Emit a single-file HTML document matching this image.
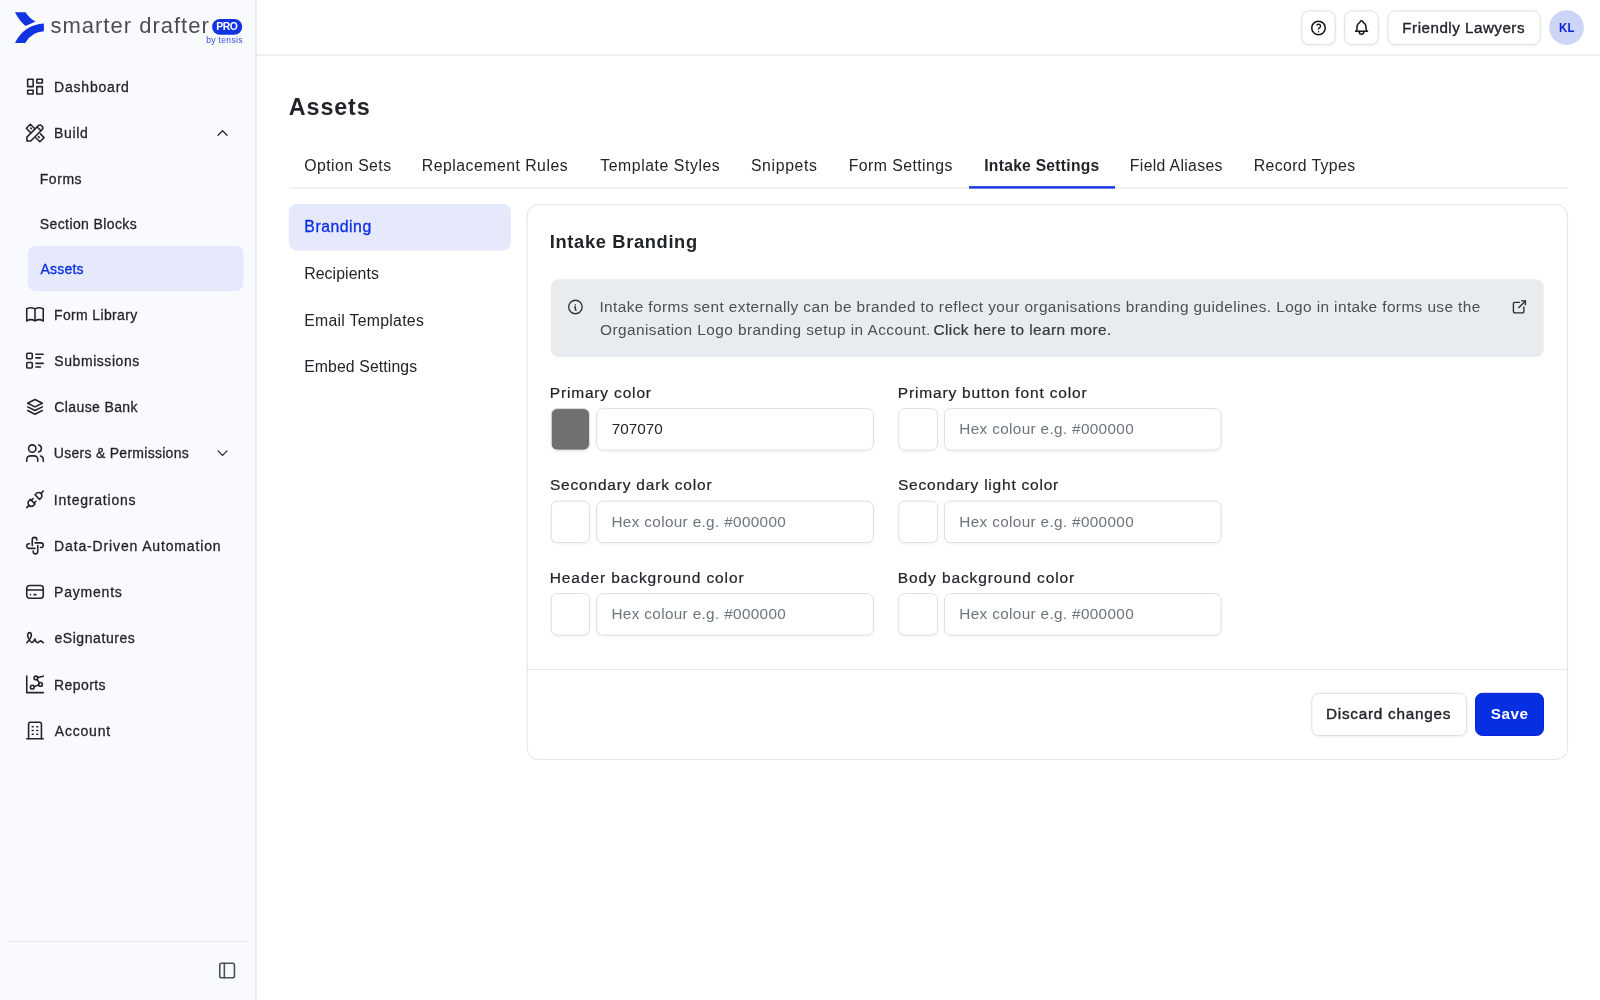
<!DOCTYPE html>
<html lang="en">
<head>
<meta charset="utf-8">
<title>Assets - Intake Settings - Smarter Drafter Pro</title>
<style>
*{box-sizing:border-box;margin:0;padding:0}
html,body{width:1600px;height:1000px;overflow:hidden;background:#fff}
body{font-family:"Liberation Sans",sans-serif;color:#212529}
#app{position:relative;width:1600px;height:1000px;overflow:hidden;will-change:transform}
.a{position:absolute}
.t{position:absolute;white-space:nowrap;line-height:1;text-decoration:none;display:block}
.ic{position:absolute;fill:none;stroke:#212529;stroke-width:1.72;stroke-linecap:round;stroke-linejoin:round;overflow:visible}
</style>
</head>
<body>
<div id="app">
<svg class="a" style="left:0;top:0" width="1600" height="1000" viewBox="0 0 1600 1000">
<defs><filter id="sh" x="-10%" y="-10%" width="120%" height="140%"><feDropShadow dx="0" dy="1" stdDeviation="1" flood-color="#101828" flood-opacity=".07"/></filter></defs>
<rect x="0.00" y="0.00" width="255.50" height="1000.00" fill="#f9fafe"/>
<rect x="255.50" y="0.00" width="1.00" height="1000.00" fill="#d9dde4"/>
<rect x="256.50" y="54.50" width="1343.50" height="1.00" fill="#dfe3e8"/>
<rect x="27.90" y="245.75" width="215.60" height="45.25" rx="8" fill="#e6e9fc"/>
<rect x="7.00" y="940.75" width="241.00" height="1.00" fill="#e1e4e9"/>
<g filter="url(#sh)">
<rect x="1301.70" y="10.90" width="33.50" height="33.70" rx="7.5" fill="#fff" stroke="#dbe0e6" stroke-width="1"/>
<rect x="1344.70" y="10.90" width="33.50" height="33.70" rx="7.5" fill="#fff" stroke="#dbe0e6" stroke-width="1"/>
<rect x="1387.90" y="10.90" width="152.30" height="33.70" rx="7.5" fill="#fff" stroke="#dbe0e6" stroke-width="1"/>
</g>
<circle cx="1566.55" cy="27.55" r="17.35" fill="#cdd5f7"/>
<rect x="289.00" y="187.50" width="1278.75" height="1.00" fill="#e3e6ea"/>
<rect x="969.00" y="186.10" width="146.00" height="2.50" fill="#1c3be3"/>
<rect x="288.75" y="203.90" width="222.25" height="46.50" rx="8" fill="#e6e9fc"/>
<rect x="527.20" y="204.60" width="1040.40" height="554.80" rx="11.5" fill="#fff" stroke="#dfe3e7" stroke-width="1"/>
<rect x="550.75" y="279.25" width="993.00" height="77.75" rx="8" fill="#e9ecef"/>
<g filter="url(#sh)">
<rect x="551.25" y="408.60" width="38.25" height="41.50" rx="6" fill="#707070" stroke="#dbe0e6" stroke-width="1"/>
<rect x="596.60" y="408.60" width="276.80" height="41.50" rx="6.5" fill="#fff" stroke="#dbe0e6" stroke-width="1"/>
<rect x="898.75" y="408.60" width="38.75" height="41.50" rx="6" fill="#fff" stroke="#dbe0e6" stroke-width="1"/>
<rect x="944.40" y="408.60" width="276.70" height="41.50" rx="6.5" fill="#fff" stroke="#dbe0e6" stroke-width="1"/>
<rect x="551.25" y="501.10" width="38.25" height="41.50" rx="6" fill="#fff" stroke="#dbe0e6" stroke-width="1"/>
<rect x="596.60" y="501.10" width="276.80" height="41.50" rx="6.5" fill="#fff" stroke="#dbe0e6" stroke-width="1"/>
<rect x="898.75" y="501.10" width="38.75" height="41.50" rx="6" fill="#fff" stroke="#dbe0e6" stroke-width="1"/>
<rect x="944.40" y="501.10" width="276.70" height="41.50" rx="6.5" fill="#fff" stroke="#dbe0e6" stroke-width="1"/>
<rect x="551.25" y="593.60" width="38.25" height="41.50" rx="6" fill="#fff" stroke="#dbe0e6" stroke-width="1"/>
<rect x="596.60" y="593.60" width="276.80" height="41.50" rx="6.5" fill="#fff" stroke="#dbe0e6" stroke-width="1"/>
<rect x="898.75" y="593.60" width="38.75" height="41.50" rx="6" fill="#fff" stroke="#dbe0e6" stroke-width="1"/>
<rect x="944.40" y="593.60" width="276.70" height="41.50" rx="6.5" fill="#fff" stroke="#dbe0e6" stroke-width="1"/>
<rect x="1311.80" y="693.30" width="154.80" height="42.20" rx="7" fill="#fff" stroke="#dbe0e6" stroke-width="1"/>
</g>
<rect x="527.40" y="668.90" width="1039.90" height="1.00" fill="#e0e4e9"/>
<rect x="1475.50" y="693.30" width="68.00" height="42.20" rx="7" fill="#052fe1" stroke="#0a1fd8" stroke-width="1"/>
</svg>

<!-- logo mark -->
<svg class="a" style="left:0;top:0" width="60" height="56" viewBox="0 0 60 56">
<path fill="#1133e1" d="M15 12.2L25.6 12.2Q29.6 18.6 35.5 21.5L25.6 26Q19 20.5 15 12.2Z"/>
<path fill="#1133e1" d="M43.9 23.6L43.9 31.3Q31.5 31.9 25.2 42.9L15 42.9Q24 25 43.9 23.6Z"/>
</svg>
<svg class="a" style="left:200px;top:10px" width="50" height="30" viewBox="200 10 50 30"><rect x="212.1" y="19" width="30.1" height="15.8" rx="7.9" fill="#1133e1"/></svg>
<svg class="a ic" style="left:0;top:0" width="1600" height="1000" viewBox="0 0 1600 1000">
<g transform="translate(24.00 75.60) scale(0.9167)"><path d="M4 4h6v8h-6z"/><path d="M4 16h6v4h-6z"/><path d="M14 12h6v8h-6z"/><path d="M14 4h6v4h-6z"/></g>
<g transform="translate(24.00 121.90) scale(0.9167)"><path d="M3.2 20.8h4.2l12.2 -12.2a2.97 2.97 0 0 0 -4.2 -4.2l-12.2 12.2z"/><path d="M14.3 5.5l4.2 4.2"/><path d="M11.3 6.9l-4.4 -4.4l-4.4 4.4l4.2 4.2"/><path d="M7.2 6.6l0.9 .9"/><path d="M12.9 17.3l4.4 4.4l4.6 -4.6l-4 -4"/><path d="M16.6 16.9l-0.9 -.9"/></g>
<g transform="translate(24.00 303.40) scale(0.9167)"><path d="M3 19a9 9 0 0 1 9 0a9 9 0 0 1 9 0"/><path d="M3 6a9 9 0 0 1 9 0a9 9 0 0 1 9 0"/><path d="M3 6v13"/><path d="M12 6v13"/><path d="M21 6v13"/></g>
<g transform="translate(24.00 349.60) scale(0.9167)"><path d="M13 5h8"/><path d="M13 9h5"/><path d="M13 15h8"/><path d="M13 19h5"/><path d="M3 5a1 1 0 0 1 1 -1h4a1 1 0 0 1 1 1v4a1 1 0 0 1 -1 1h-4a1 1 0 0 1 -1 -1z"/><path d="M3 15a1 1 0 0 1 1 -1h4a1 1 0 0 1 1 1v4a1 1 0 0 1 -1 1h-4a1 1 0 0 1 -1 -1z"/></g>
<g transform="translate(24.00 395.90) scale(0.9167)"><path d="M12 4l-8 4l8 4l8 -4l-8 -4"/><path d="M4 12l8 4l8 -4"/><path d="M4 16l8 4l8 -4"/></g>
<g transform="translate(24.00 442.10) scale(0.9167)"><path d="M5 7a4 4 0 1 0 8 0a4 4 0 1 0 -8 0"/><path d="M3 21v-2a4 4 0 0 1 4 -4h4a4 4 0 0 1 4 4v2"/><path d="M16 3.13a4 4 0 0 1 0 7.75"/><path d="M21 21v-2a4 4 0 0 0 -3 -3.85"/></g>
<g transform="translate(24.00 488.40) scale(0.9167)"><path d="M7 12l5 5l-1.5 1.5a3.536 3.536 0 1 1 -5 -5l1.5 -1.5z"/><path d="M17 12l-5 -5l1.5 -1.5a3.536 3.536 0 1 1 5 5l-1.5 1.5z"/><path d="M3 21l2.5 -2.5"/><path d="M18.5 5.5l2.5 -2.5"/><path d="M10 11l-2 2"/><path d="M13 14l-2 2"/></g>
<g transform="translate(24.00 534.60) scale(0.9167)"><path d="M9 12v-6.5a2.5 2.5 0 0 1 5 0v.5"/><path d="M12 9h6.5a2.5 2.5 0 0 1 0 5h-.5"/><path d="M15 12v6.5a2.5 2.5 0 0 1 -5 0v-.5"/><path d="M12 15h-6.5a2.5 2.5 0 0 1 0 -5h.5"/></g>
<g transform="translate(24.00 580.90) scale(0.9167)"><path d="M3 8a3 3 0 0 1 3 -3h12a3 3 0 0 1 3 3v8a3 3 0 0 1 -3 3h-12a3 3 0 0 1 -3 -3z"/><path d="M3 10h18"/><path d="M7 15h.01"/><path d="M11 15h2"/></g>
<g transform="translate(24.00 627.10) scale(0.9167)"><path d="M3 17c3.333 -3.333 5 -6 5 -8c0 -3 -1 -3 -2 -3s-2.032 1.085 -2 3c.034 2.048 1.658 4.877 2.5 6c1.500 2 2.500 2.500 3.500 1l2 -3c.333 2.667 1.333 4 3 4c.530 0 2.639 -2 3 -2c.517 0 1.517 .667 3 2"/></g>
<g transform="translate(24.00 673.40) scale(0.9167)"><path d="M3 3v18h18"/><path d="M7 15a2 2 0 1 0 4 0a2 2 0 1 0 -4 0"/><path d="M11 5a2 2 0 1 0 4 0a2 2 0 1 0 -4 0"/><path d="M16 12a2 2 0 1 0 4 0a2 2 0 1 0 -4 0"/><path d="M21 3l-6 1.500"/><path d="M14.113 6.650l2.771 3.695"/><path d="M16 12.500l-5 2"/></g>
<g transform="translate(24.00 719.50) scale(0.9167)"><path d="M3 21h18"/><path d="M9 8h1"/><path d="M9 12h1"/><path d="M9 16h1"/><path d="M14 8h1"/><path d="M14 12h1"/><path d="M14 16h1"/><path d="M5 21v-16a2 2 0 0 1 2 -2h10a2 2 0 0 1 2 2v16"/></g>
<g transform="translate(213.55 124.00) scale(0.7500)" stroke-width="1.65"><path d="M6 15l6 -6l6 6"/></g>
<g transform="translate(213.55 444.10) scale(0.7500)" stroke-width="1.65"><path d="M6 9l6 6l6 -6"/></g>
<g transform="translate(216.10 959.50) scale(0.9167)" stroke="#495057"><path d="M4 6a2 2 0 0 1 2 -2h12a2 2 0 0 1 2 2v12a2 2 0 0 1 -2 2h-12a2 2 0 0 1 -2 -2z"/><path d="M9 4v16"/></g>
<g transform="translate(1309.50 18.90) scale(0.7500)" stroke-width="2" stroke="#16181b"><path d="M3 12a9 9 0 1 0 18 0a9 9 0 1 0 -18 0"/><path d="M12 17v.01"/><path d="M12 13.5a1.5 1.5 0 0 1 1 -1.5a2.6 2.6 0 1 0 -3 -4"/></g>
<g transform="translate(1352.50 18.60) scale(0.7500)" stroke-width="2" stroke="#16181b"><path d="M10 5a2 2 0 1 1 4 0a7 7 0 0 1 4 6v3a4 4 0 0 0 2 3h-16a4 4 0 0 0 2 -3v-3a7 7 0 0 1 4 -6"/><path d="M9 17v1a3 3 0 0 0 6 0v-1"/></g>
<g transform="translate(566.40 298.00) scale(0.7500)" stroke-width="1.75" stroke="#2b3440"><path d="M3 12a9 9 0 1 0 18 0a9 9 0 0 0 -18 0"/><path d="M12 9h.01"/><path d="M11 12h1v4h1"/></g>
<g transform="translate(1510.40 297.90) scale(0.7500)" stroke-width="1.8" stroke="#222c38"><path d="M12 6h-6a2 2 0 0 0 -2 2v10a2 2 0 0 0 2 2h10a2 2 0 0 0 2 -2v-6"/><path d="M11 13l9 -9"/><path d="M15 4h5v5"/></g>
</svg>
<header class="brand">
<span class="t" id="logo" style="left:50.42px;top:14.68px;font-size:22px;letter-spacing:1.010px;font-weight:400;color:#4d4d4d;">smarter drafter</span>
<span class="t" id="pro" style="left:216.30px;top:22.40px;font-size:10.4px;letter-spacing:-0.450px;font-weight:700;color:#ffffff;">PRO</span>
<span class="t" id="bytensis" style="left:206.23px;top:36.32px;font-size:8.6px;letter-spacing:0.294px;font-weight:400;color:#2f4de6;">by tensis</span>
</header>
<nav class="sidebar-nav">
<span class="t" id="s1" style="left:54.10px;top:79.85px;font-size:14.0px;letter-spacing:0.790px;font-weight:400;color:#212529;-webkit-text-stroke:0.28px currentColor;">Dashboard</span>
<span class="t" id="s2" style="left:54.10px;top:126.10px;font-size:14.0px;letter-spacing:0.648px;font-weight:400;color:#212529;-webkit-text-stroke:0.28px currentColor;">Build</span>
<span class="t" id="s3" style="left:39.79px;top:172.10px;font-size:14.0px;letter-spacing:0.536px;font-weight:400;color:#212529;-webkit-text-stroke:0.28px currentColor;">Forms</span>
<span class="t" id="s4" style="left:39.80px;top:217.40px;font-size:14.0px;letter-spacing:0.394px;font-weight:400;color:#212529;-webkit-text-stroke:0.28px currentColor;">Section Blocks</span>
<span class="t" id="s5" style="left:40.51px;top:262.35px;font-size:14.0px;letter-spacing:0.197px;font-weight:400;color:#0a2ee0;-webkit-text-stroke:0.32px currentColor;">Assets</span>
<span class="t" id="s6" style="left:54.10px;top:307.60px;font-size:14.0px;letter-spacing:0.343px;font-weight:400;color:#212529;-webkit-text-stroke:0.28px currentColor;">Form Library</span>
<span class="t" id="s7" style="left:54.36px;top:353.85px;font-size:14.0px;letter-spacing:0.553px;font-weight:400;color:#212529;-webkit-text-stroke:0.28px currentColor;">Submissions</span>
<span class="t" id="s8" style="left:54.37px;top:400.10px;font-size:14.0px;letter-spacing:0.379px;font-weight:400;color:#212529;-webkit-text-stroke:0.28px currentColor;">Clause Bank</span>
<span class="t" id="s9" style="left:53.86px;top:446.35px;font-size:14.0px;letter-spacing:0.273px;font-weight:400;color:#212529;-webkit-text-stroke:0.28px currentColor;">Users &amp; Permissions</span>
<span class="t" id="s10" style="left:53.72px;top:492.60px;font-size:14.0px;letter-spacing:0.794px;font-weight:400;color:#212529;-webkit-text-stroke:0.28px currentColor;">Integrations</span>
<span class="t" id="s11" style="left:54.10px;top:538.85px;font-size:14.0px;letter-spacing:0.853px;font-weight:400;color:#212529;-webkit-text-stroke:0.28px currentColor;">Data-Driven Automation</span>
<span class="t" id="s12" style="left:54.10px;top:585.10px;font-size:14.0px;letter-spacing:0.780px;font-weight:400;color:#212529;-webkit-text-stroke:0.28px currentColor;">Payments</span>
<span class="t" id="s13" style="left:54.38px;top:631.35px;font-size:14.0px;letter-spacing:0.575px;font-weight:400;color:#212529;-webkit-text-stroke:0.28px currentColor;">eSignatures</span>
<span class="t" id="s14" style="left:54.10px;top:677.60px;font-size:14.0px;letter-spacing:0.404px;font-weight:400;color:#212529;-webkit-text-stroke:0.28px currentColor;">Reports</span>
<span class="t" id="s15" style="left:54.86px;top:723.60px;font-size:14.0px;letter-spacing:0.781px;font-weight:400;color:#212529;-webkit-text-stroke:0.28px currentColor;">Account</span>
</nav>
<header class="topbar">
<span class="t" id="org" style="left:1402.33px;top:19.98px;font-size:15.2px;letter-spacing:0.493px;font-weight:400;color:#212529;-webkit-text-stroke:0.35px currentColor;">Friendly Lawyers</span>
<span class="t" id="kl" style="left:1558.80px;top:21.19px;font-size:13.6px;letter-spacing:0.446px;font-weight:700;color:#0a24dc;transform:scaleX(.84);transform-origin:0 0;">KL</span>
</header>
<div class="page-head">
<h1 class="t" id="title" style="left:288.85px;top:95.88px;font-size:23.3px;letter-spacing:0.892px;font-weight:700;color:#212529;">Assets</h1>
</div>
<nav class="tabs">
<span class="t" id="t1" style="left:304.27px;top:157.63px;font-size:15.8px;letter-spacing:0.423px;font-weight:400;color:#212529;">Option Sets</span>
<span class="t" id="t2" style="left:421.87px;top:157.63px;font-size:15.8px;letter-spacing:0.490px;font-weight:400;color:#212529;">Replacement Rules</span>
<span class="t" id="t3" style="left:600.30px;top:157.63px;font-size:15.8px;letter-spacing:0.565px;font-weight:400;color:#212529;">Template Styles</span>
<span class="t" id="t4" style="left:750.95px;top:157.63px;font-size:15.8px;letter-spacing:0.651px;font-weight:400;color:#212529;">Snippets</span>
<span class="t" id="t5" style="left:848.75px;top:157.63px;font-size:15.8px;letter-spacing:0.447px;font-weight:400;color:#212529;">Form Settings</span>
<span class="t" id="t6" style="left:984.26px;top:157.79px;font-size:15.6px;letter-spacing:0.289px;font-weight:700;color:#212529;">Intake Settings</span>
<span class="t" id="t7" style="left:1129.87px;top:157.63px;font-size:15.8px;letter-spacing:0.322px;font-weight:400;color:#212529;">Field Aliases</span>
<span class="t" id="t8" style="left:1253.75px;top:157.63px;font-size:15.8px;letter-spacing:0.379px;font-weight:400;color:#212529;">Record Types</span>
</nav>
<nav class="subnav">
<span class="t" id="n1" style="left:304.36px;top:219.43px;font-size:15.8px;letter-spacing:0.515px;font-weight:400;color:#0a2ee0;-webkit-text-stroke:0.3px currentColor;">Branding</span>
<span class="t" id="n2" style="left:304.14px;top:265.73px;font-size:15.8px;letter-spacing:0.112px;font-weight:400;color:#212529;">Recipients</span>
<span class="t" id="n3" style="left:304.14px;top:312.63px;font-size:15.8px;letter-spacing:0.292px;font-weight:400;color:#212529;">Email Templates</span>
<span class="t" id="n4" style="left:304.14px;top:359.13px;font-size:15.8px;letter-spacing:0.111px;font-weight:400;color:#212529;">Embed Settings</span>
</nav>
<section class="intake-branding">
<h2 class="t" id="h2" style="left:549.82px;top:233.26px;font-size:18.3px;letter-spacing:0.653px;font-weight:700;color:#212529;">Intake Branding</h2>
<p class="t" id="i1" style="left:599.38px;top:298.56px;font-size:15.4px;letter-spacing:0.397px;font-weight:400;color:#495057;">Intake forms sent externally can be branded to reflect your organisations branding guidelines. Logo in intake forms use the</p>
<p class="t" id="i2" style="left:600.04px;top:321.66px;font-size:15.4px;letter-spacing:0.440px;font-weight:400;color:#495057;">Organisation Logo branding setup in Account.</p>
<a class="t" id="i3" style="left:933.47px;top:321.66px;font-size:15.4px;letter-spacing:0.423px;font-weight:400;color:#343a40;-webkit-text-stroke:0.22px currentColor;">Click here to learn more.</a>
<label class="t" id="l1" style="left:549.76px;top:384.78px;font-size:15.5px;letter-spacing:0.829px;font-weight:400;color:#212529;-webkit-text-stroke:0.22px currentColor;">Primary color</label>
<span class="t" id="v1" style="left:611.67px;top:421.25px;font-size:15.3px;letter-spacing:-0.009px;font-weight:400;color:#212529;">707070</span>
<label class="t" id="l2" style="left:897.76px;top:384.78px;font-size:15.5px;letter-spacing:0.835px;font-weight:400;color:#212529;-webkit-text-stroke:0.22px currentColor;">Primary button font color</label>
<span class="t" id="p2" style="left:959.36px;top:421.35px;font-size:15.3px;letter-spacing:0.346px;font-weight:400;color:#6c757d;">Hex colour e.g. #000000</span>
<label class="t" id="l3" style="left:549.99px;top:477.28px;font-size:15.5px;letter-spacing:0.797px;font-weight:400;color:#212529;-webkit-text-stroke:0.22px currentColor;">Secondary dark color</label>
<span class="t" id="p3" style="left:611.42px;top:513.85px;font-size:15.3px;letter-spacing:0.352px;font-weight:400;color:#6c757d;">Hex colour e.g. #000000</span>
<label class="t" id="l4" style="left:897.99px;top:477.28px;font-size:15.5px;letter-spacing:0.776px;font-weight:400;color:#212529;-webkit-text-stroke:0.22px currentColor;">Secondary light color</label>
<span class="t" id="p4" style="left:959.36px;top:513.85px;font-size:15.3px;letter-spacing:0.346px;font-weight:400;color:#6c757d;">Hex colour e.g. #000000</span>
<label class="t" id="l5" style="left:549.76px;top:569.78px;font-size:15.5px;letter-spacing:0.902px;font-weight:400;color:#212529;-webkit-text-stroke:0.22px currentColor;">Header background color</label>
<span class="t" id="p5" style="left:611.42px;top:606.35px;font-size:15.3px;letter-spacing:0.352px;font-weight:400;color:#6c757d;">Hex colour e.g. #000000</span>
<label class="t" id="l6" style="left:897.76px;top:569.78px;font-size:15.5px;letter-spacing:0.898px;font-weight:400;color:#212529;-webkit-text-stroke:0.22px currentColor;">Body background color</label>
<span class="t" id="p6" style="left:959.36px;top:606.35px;font-size:15.3px;letter-spacing:0.346px;font-weight:400;color:#6c757d;">Hex colour e.g. #000000</span>
<span class="t" id="b1" style="left:1326.03px;top:706.15px;font-size:15.3px;letter-spacing:0.739px;font-weight:400;color:#212529;-webkit-text-stroke:0.4px currentColor;">Discard changes</span>
<span class="t" id="b2" style="left:1490.70px;top:706.15px;font-size:15.3px;letter-spacing:0.513px;font-weight:700;color:#ffffff;">Save</span>
</section>
</div>
</body>
</html>
